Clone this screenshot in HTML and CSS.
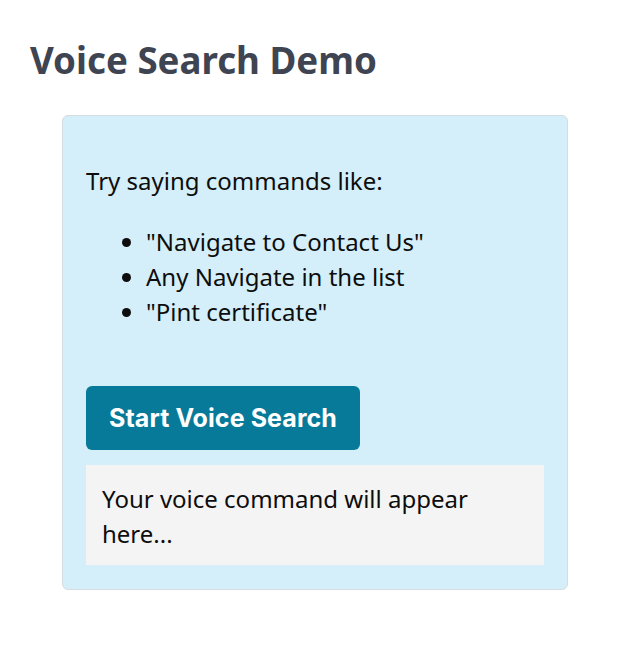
FILE: index.html
```html
<!DOCTYPE html>
<html>
<head>
<meta charset="utf-8">
<link rel="stylesheet" href="styles.css">
</head>
<body>
<h1 class="title">Voice Search Demo</h1>
<div class="card">
  <p class="intro">Try saying commands like:</p>
  <ul class="examples">
    <li>"Navigate to Contact Us"</li>
    <li>Any Navigate in the list</li>
    <li>"Pint certificate"</li>
  </ul>
  <button class="start-btn">Start Voice Search</button>
  <div class="output">Your voice command will appear here...</div>
</div>
</body>
</html>
```
FILE: styles.css
```css
html, body {
  margin: 0;
  padding: 0;
  background: #ffffff;
}
body {
  padding: 0 30px;
  font-family: "Noto Sans", "Open Sans", sans-serif;
  color: #0d0d0d;
}
.title {
  margin: 0;
  padding-top: 34px;
  font-size: 36.7px;
  line-height: 52px;
  font-weight: 700;
  color: #3e4451;
}
.card {
  margin: 29px 0 0 32px;
  width: 458px;
  padding: 24px 23px;
  background: #d4eff9;
  border: 1px solid #d6dde0;
  border-radius: 6px;
  font-size: 24px;
  line-height: 35px;
}
.intro {
  margin: 23px 0 26px 0;
}
.examples {
  margin: 0;
  padding-left: 60px;
}
.start-btn {
  display: block;
  margin-top: 57px;
  height: 64px;
  padding: 0 23px;
  border: none;
  border-radius: 6px;
  background: #087a99;
  color: #ffffff;
  font-family: Inter, "Liberation Sans", sans-serif;
  font-weight: 700;
  font-size: 25px;
  letter-spacing: 0.08px;
}
.output {
  margin-top: 15px;
  padding: 16px 16px 14px 16px;
  background: #f4f4f4;
}
```
